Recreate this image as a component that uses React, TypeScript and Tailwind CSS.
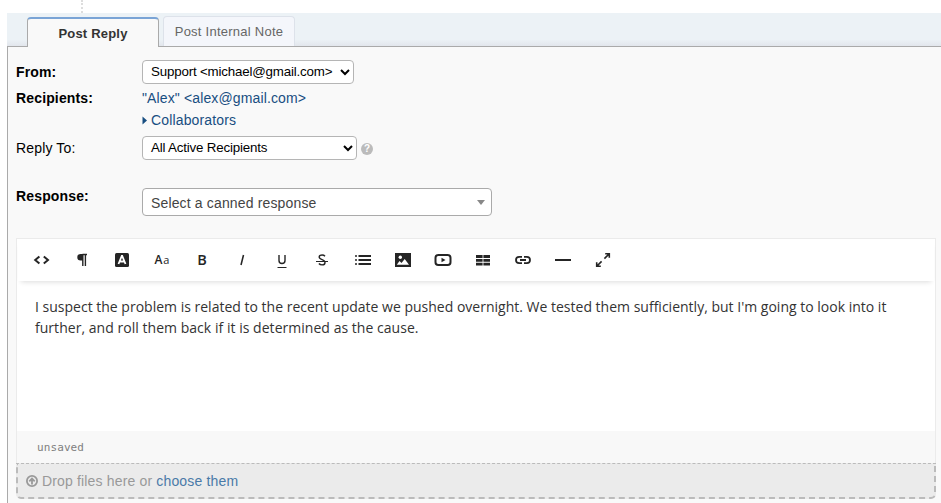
import React from "react";

const ink = "#252525";

function Icon({ children }: { children: React.ReactNode }) {
  return (
    <button className="flex h-10 w-[40.14px] shrink-0 items-center justify-center">
      <svg width="20" height="20" viewBox="0 0 20 20" fill="none" stroke={ink}>
        {children}
      </svg>
    </button>
  );
}

function Glyph({ children }: { children: React.ReactNode }) {
  return (
    <button className="flex h-10 w-[40.14px] shrink-0 items-center justify-center font-['Open_Sans',sans-serif] text-[#252525]">
      {children}
    </button>
  );
}

function Toolbar() {
  return (
    <div className="mx-px flex h-[42px] items-center pl-[3.5px] shadow-[0_4px_5px_-3px_rgba(0,0,0,0.14)]">
      <Icon>
        <path d="M7.4 6.4 3.2 10l4.200 3.600M11.800 6.400l4.200 3.600-4.200 3.600" strokeWidth="2" />
      </Icon>
      <Icon>
        <path d="M10.500 4.500H15M10.800 4v12M13.400 4v12" strokeWidth="1.400" />
        <path d="M11 4H8.500a3.100 3.100 0 0 0 0 6.400H11z" fill={ink} stroke="none" />
      </Icon>
      <Icon>
        <rect x="3" y="3" width="14" height="14" rx="1.5" fill={ink} stroke="none" />
        <path d="M6.500 14 9.800 5.800h.4L13.500 14M7.800 11.500h4.400" stroke="#fff" strokeWidth="1.800" />
      </Icon>
      <Glyph>
        <span className="pl-px text-[12px] leading-none font-semibold tracking-[0.800px]">
          A<span className="text-[11px] font-medium">a</span>
        </span>
      </Glyph>
      <Glyph>
        <span className="text-[14.5px] leading-none font-semibold">B</span>
      </Glyph>
      <Icon>
        <path d="M11.500 5 9 15" strokeWidth="1.500" />
      </Icon>
      <Icon>
        <path d="M7 5v5.400c0 2 1 3.100 3 3.100s3-1.100 3-3.100V5" strokeWidth="1.400" />
        <path d="M5.500 17.500h9" strokeWidth="1" />
      </Icon>
      <Icon>
        <path d="M13 6.200C12.300 5.400 11.300 5 10.100 5 8.400 5 7.200 5.800 7.200 7.100c0 3.200 5.800 2 5.800 5.300 0 1.500-1.200 2.500-3 2.500-1.300 0-2.400-.5-3.100-1.400" strokeWidth="1.400" />
        <path d="M4 11.500h12" strokeWidth="1" />
      </Icon>
      <Icon>
        <path d="M5.500 6H18M5.500 10H18M5.500 14H18" strokeWidth="2" />
        <path d="M2 6h2M2 10h2M2 14h2" strokeWidth="1.500" />
      </Icon>
      <Icon>
        <rect x="2" y="3" width="16" height="14" fill={ink} stroke="none" />
        <circle cx="7.300" cy="7.200" r="1.700" fill="#fff" stroke="none" />
        <path d="m3.800 14.700 2.700-3.600 2 2 3.200-4.200 4.300 5.800z" fill="#fff" stroke="none" />
      </Icon>
      <Icon>
        <rect x="2.500" y="5" width="15" height="10" rx="2.800" strokeWidth="2" />
        <path d="m8.500 7.800 4 2.200-4 2.200z" fill={ink} stroke="none" />
      </Icon>
      <Icon>
        <path
          d="M3 5h6.600v3H3zM10.400 5H17v3h-6.600zM3 8.900h6.600v2.900H3zM10.400 8.900H17v2.900h-6.600zM3 12.700h6.600v2.800H3zM10.400 12.700H17v2.800h-6.600z"
          fill={ink}
          stroke="none"
        />
      </Icon>
      <Icon>
        <path d="M9 6.800H6.200a3.200 3.200 0 0 0 0 6.400H9M11 6.800h2.800a3.200 3.200 0 0 1 0 6.400H11M7 10h6" strokeWidth="1.800" />
      </Icon>
      <Icon>
        <path d="M2 10h16" strokeWidth="2" />
      </Icon>
      <Icon>
        <path d="M12.200 3.700H16.300V7.800M16 4l-4.600 4.600M7.800 16.300H3.700V12.200M4 16l4.600-4.600" strokeWidth="1.600" />
      </Icon>
    </div>
  );
}

function Select({ label, width }: { label: string; width: string }) {
  return (
    <div className={`flex h-6 items-center justify-between rounded-[4px] border border-[#b5b5b5] bg-white pr-[3px] pl-2 text-[13.333px] text-black ${width}`}>
      <span className="tracking-[-0.18px] whitespace-nowrap">{label}</span>
      <svg width="10" height="8" viewBox="0 0 10 8" fill="none" stroke="#000" strokeWidth="2">
        <path d="m1 2 4 4 4-4" />
      </svg>
    </div>
  );
}

function Tabs() {
  return (
    <div className="ml-[7px] flex h-[34px] border-b border-[#aaa] bg-[linear-gradient(#ecf2f6_80%,#e2e6ec)] pl-5 text-[13px]">
      <div className="mt-1 mr-1 flex h-[30px] w-[132px] items-center justify-center rounded-t-[4px] border-x border-t-2 border-x-[#aaa] border-t-[#7aa4d6] bg-[#f9f9f9] pt-px font-bold tracking-[0.2px] text-[#333]">
        Post Reply
      </div>
      <div className="mt-[3px] flex h-[30px] w-[132px] items-center justify-center rounded-t-[4px] border border-b-0 border-[#dde2ea] bg-[#f4f6fb] pt-px tracking-[0.25px] text-[#666]">
        Post Internal Note
      </div>
    </div>
  );
}

export default function App() {
  return (
    <div className="h-[503px] w-[941px] overflow-hidden bg-white font-['Liberation_Sans',Arial,sans-serif] text-[14px] text-black">
      <div className="ml-[81px] h-[13px] border-l-2 border-dotted border-[#ddd]" />
      <Tabs />
      <div className="ml-[7px] h-[456px] border-l border-[#aaa] bg-[#f9f9f9] pl-2">
        <div className="flex h-[191px] pt-[13px]">
          <div className="w-[126px] font-bold tracking-[0.15px]">
            <div className="flex h-6 items-center">From:</div>
            <div className="mt-[3px] flex h-[22px] items-center">Recipients:</div>
            <div className="mt-7 flex h-[22px] items-center font-normal">Reply To:</div>
            <div className="mt-[26px] flex h-[22px] items-center">Response:</div>
          </div>
          <div>
            <Select label="Support <michael@gmail.com>" width="w-[212px]" />
            <div className="mt-[3px] flex h-[22px] items-center tracking-[0.13px] text-[#184e81]">"Alex" &lt;alex@gmail.com&gt;</div>
            <div className="flex h-[22px] items-center tracking-[0.15px] text-[#184e81]">
              <svg width="6" height="9" viewBox="0 0 6 9" className="mr-[3px]">
                <path d="M0.500 0.500v8l4.500-4z" fill="#184e81" />
              </svg>
              Collaborators
            </div>
            <div className="mt-[5px] flex items-center">
              <Select label="All Active Recipients" width="w-[215px]" />
              <span className="mt-[2px] ml-1 flex size-3 items-center justify-center rounded-full bg-[#bbb] text-[10px] leading-none font-bold text-white">?</span>
            </div>
            <div className="mt-7 flex h-7 w-[350px] items-center justify-between rounded-[4px] border border-[#aaa] bg-white pr-[6px] pl-2 text-[#444]">
              <span className="pt-[3px] tracking-[0.15px]">Select a canned response</span>
              <span className="mt-px border-x-4 border-t-5 border-x-transparent border-t-[#888]" />
            </div>
          </div>
        </div>
        <div className="w-[920px]">
          <div className="h-[225px] border border-b-0 border-[#ebebeb] bg-white">
            <Toolbar />
            <div className="h-[150px] pt-[15px] pl-[18px] font-['Open_Sans',sans-serif] text-[14px] leading-[21px] text-[#333]">
              <p className="tracking-[0.004px] whitespace-nowrap">I suspect the problem is related to the recent update we pushed overnight. We tested them sufficiently, but I'm going to look into it</p>
              <p className="tracking-[0.035px] whitespace-nowrap">further, and roll them back if it is determined as the cause.</p>
            </div>
            <div className="flex h-8 items-center bg-[#f8f8f8] pt-[2px] pl-5 font-['DejaVu_Sans_Mono',monospace] text-[11px] tracking-[0.1px] text-[#808080]">unsaved</div>
          </div>
          <div className="flex h-9 items-center rounded-b-[5px] border-2 border-t border-dashed border-[#bbb] bg-[#ebebeb] pt-px pl-2 text-[#999]">
            <svg width="12" height="12" viewBox="0 0 12 12" fill="none" stroke="#999" strokeWidth="1.800" className="mr-1">
              <circle cx="6" cy="6" r="5.100" />
              <path d="M6 9.500V3.800M3.300 6.300 6 3.600l2.700 2.700" />
            </svg>
            <span className="pt-px tracking-[0.16px]">Drop files here or <span className="text-[#4a7aa8]">choose them</span></span>
          </div>
        </div>
      </div>
    </div>
  );
}
